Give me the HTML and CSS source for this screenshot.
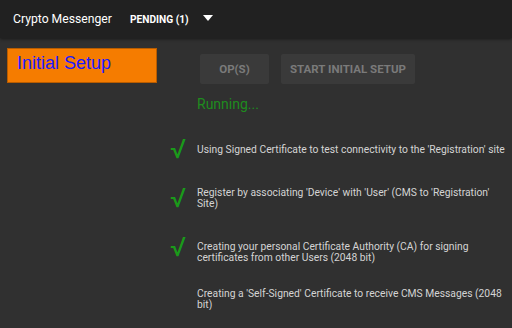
FILE: index.html
```html
<!DOCTYPE html>
<html lang="en">
<head>
    <meta charset="UTF-8">
    <title>Crypto Messenger</title>
    <link rel="stylesheet" href="styles.css">
</head>
<body>
    <div id="topbar">
        <div id="apptitle">Crypto Messenger</div>
        <div id="pending">PENDING (1)</div>
        <div id="dropdown">
            <svg width="10" height="6" viewBox="0 0 10 6"><path d="M0 0 L10 0 L5 6 Z" fill="#ffffff"/></svg>
        </div>
    </div>

    <div id="page">
        <div id="side">
            <div id="setuptab">Initial Setup</div>
        </div>

        <div id="main">
            <div class="buttons">
                <button class="btn">OP(S)</button>
                <button class="btn">START INITIAL SETUP</button>
            </div>
            <div id="running">Running...</div>

            <div class="step">
                <div class="check">&radic;</div>
                <div class="steptext">Using Signed Certificate to test connectivity to the 'Registration' site</div>
            </div>
            <div class="step">
                <div class="check">&radic;</div>
                <div class="steptext">Register by associating 'Device' with 'User' (CMS to 'Registration' Site)</div>
            </div>
            <div class="step raised">
                <div class="check">&radic;</div>
                <div class="steptext">Creating your personal Certificate Authority (CA) for signing certificates from other Users (2048 bit)</div>
            </div>
            <div class="step pendingstep">
                <div class="check"></div>
                <div class="steptext">Creating a 'Self-Signed' Certificate to receive CMS Messages (2048 bit)</div>
            </div>
        </div>
    </div>
</body>
</html>
```

FILE: styles.css
```css
body {
    margin: 0;
    background-color: #303030;
    font-family: Roboto, "Liberation Sans", sans-serif;
    overflow: hidden;
}

/* top app bar */
#topbar {
    height: 38px;
    background-color: #212121;
    display: flex;
    align-items: center;
    padding-left: 13px;
    box-shadow: 0 1px 3px rgba(0, 0, 0, 0.5);
    position: relative;
}

#apptitle {
    color: #ffffff;
    font-size: 12.2px;
}

#pending {
    color: #ffffff;
    font-size: 10.2px;
    font-weight: bold;
    margin-left: 18px;
}

#dropdown {
    margin-left: 14px;
    display: flex;
    align-items: center;
    padding-bottom: 2px;
}

#page {
    display: flex;
}

/* left column */
#side {
    width: 197px;
    flex-shrink: 0;
    padding: 10px 0 0 7px;
    box-sizing: border-box;
}

#setuptab {
    width: 150px;
    height: 35px;
    box-sizing: border-box;
    background-color: #f57c00;
    border: 1px solid #b85c00;
    color: #1a1aff;
    font-family: "Liberation Sans", Arial, sans-serif;
    font-size: 18px;
    padding: 4px 0 0 9px;
}

/* right column */
#main {
    flex: 1;
    padding-top: 16px;
}

.buttons {
    display: flex;
    gap: 12px;
    padding-left: 3px;
}

.btn {
    height: 30px;
    background-color: #3a3a3a;
    border: none;
    border-radius: 2px;
    color: #7a7a7a;
    font-family: Roboto, sans-serif;
    font-size: 11.5px;
    font-weight: bold;
    padding: 0 9px;
}

.btn:first-child {
    width: 69px;
}

#running {
    color: #1e8c1e;
    font-size: 14px;
    line-height: 16px;
    margin-top: 12px;
}

/* setup steps with a tick when done */
.step {
    display: flex;
    align-items: center;
    margin-left: -28px;
    margin-top: 32px;
}

.step.pendingstep {
    margin-top: 25px;
}

.check {
    width: 28px;
    height: 11px;
    flex-shrink: 0;
    color: #1a9a1a;
    font-size: 27px;
    line-height: 11px;
    padding-left: 1px;
    box-sizing: border-box;
}

.step.raised .check {
    margin-top: -9px;
}

.steptext {
    color: #d4d4d4;
    font-size: 10.3px;
    line-height: 11px;
}
```
